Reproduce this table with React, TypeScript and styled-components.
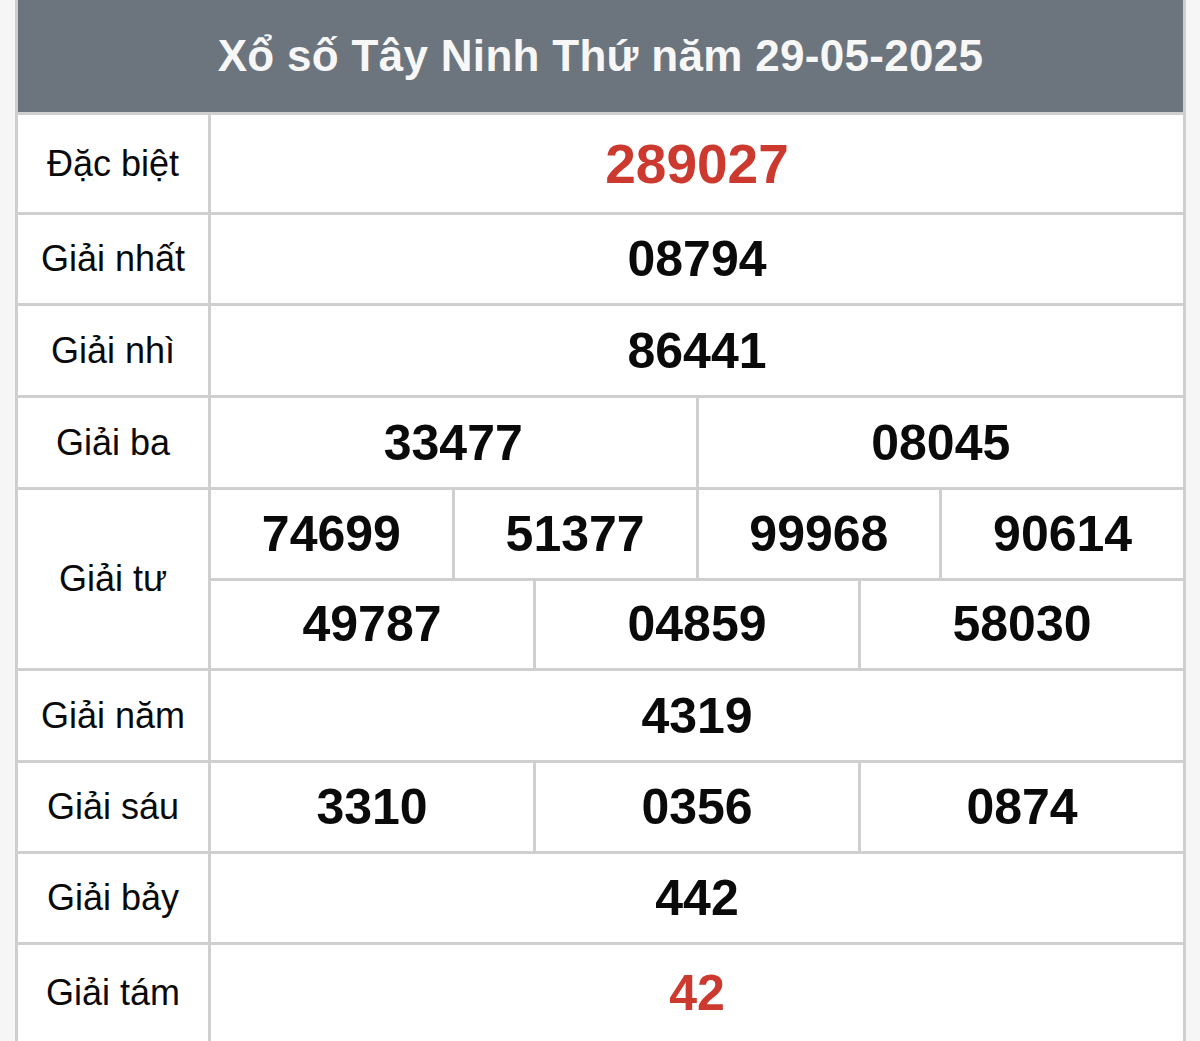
import styled, { createGlobalStyle } from "styled-components";

const GlobalStyle = createGlobalStyle`
    body {
        margin: 0;
        background: #f6f6f6;
        font-family: "Liberation Sans", Arial, sans-serif;
    }
`;

const Board = styled.section`
    box-sizing: border-box;
    width: 1171px;
    margin-left: 15px;
    border-left: 3px solid #cfcfcf;
    border-right: 3px solid #cfcfcf;
    background: #ffffff;
`;

const Header = styled.h1`
    margin: 0;
    height: 112px;
    display: flex;
    align-items: center;
    justify-content: center;
    background: #6c757d;
    color: #f7f7f7;
    font-size: 44px;
    font-weight: bold;
    letter-spacing: 0.3px;
`;

const Row = styled.div<{ height: number }>`
    display: flex;
    height: ${props => props.height}px;
    border-top: 3px solid #cfcfcf;
    box-sizing: border-box;
`;

const Label = styled.div`
    width: 190px;
    flex-shrink: 0;
    display: flex;
    align-items: center;
    justify-content: center;
    border-right: 3px solid #cfcfcf;
    font-size: 36px;
    color: #0a0a0a;
`;

const Values = styled.div`
    flex: 1;
    display: flex;
    flex-direction: column;
`;

const SubRow = styled.div`
    flex: 1;
    display: flex;
    & + & {
        border-top: 3px solid #cfcfcf;
    }
`;

const Cell = styled.div<{ red?: boolean; big?: boolean }>`
    flex: 1;
    display: flex;
    align-items: center;
    justify-content: center;
    font-size: ${props => (props.big ? 55 : 50)}px;
    font-weight: bold;
    color: ${props => (props.red ? "#cc3a2f" : "#0a0a0a")};
    & + & {
        border-left: 3px solid #cfcfcf;
    }
`;

interface IPrize {
    name: string;
    rows: string[][];
    height: number;
    red?: boolean;
    big?: boolean;
}

const PRIZES: IPrize[] = [
    { name: "Đặc biệt", rows: [["289027"]], height: 100, red: true, big: true },
    { name: "Giải nhất", rows: [["08794"]], height: 91 },
    { name: "Giải nhì", rows: [["86441"]], height: 92 },
    { name: "Giải ba", rows: [["33477", "08045"]], height: 92 },
    { name: "Giải tư", rows: [["74699", "51377", "99968", "90614"], ["49787", "04859", "58030"]], height: 181 },
    { name: "Giải năm", rows: [["4319"]], height: 92 },
    { name: "Giải sáu", rows: [["3310", "0356", "0874"]], height: 91 },
    { name: "Giải bảy", rows: [["442"]], height: 91 },
    { name: "Giải tám", rows: [["42"]], height: 99, red: true },
];

const App = () => {
    return (
        <>
            <GlobalStyle />
            <Board>
                <Header>Xổ số Tây Ninh Thứ năm 29-05-2025</Header>
                {PRIZES.map((prize) => (
                    <Row key={prize.name} height={prize.height}>
                        <Label>{prize.name}</Label>
                        <Values>
                            {prize.rows.map((numbers, i) => (
                                <SubRow key={i}>
                                    {numbers.map((n) => (
                                        <Cell key={n} red={prize.red} big={prize.big}>{n}</Cell>
                                    ))}
                                </SubRow>
                            ))}
                        </Values>
                    </Row>
                ))}
            </Board>
        </>
    );
};

export default App;
